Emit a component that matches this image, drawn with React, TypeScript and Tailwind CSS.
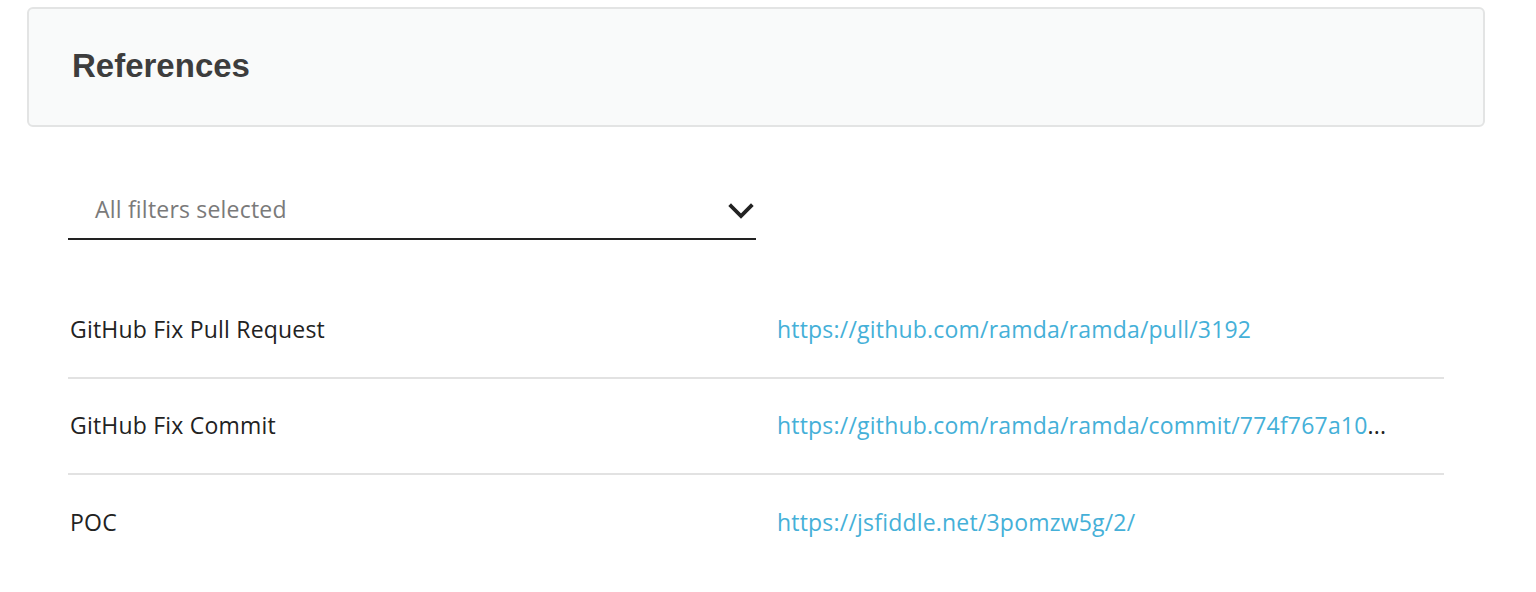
import React from 'react';

const rows = [
  { label: 'GitHub Fix Pull Request', url: 'https://github.com/ramda/ramda/pull/3192', more: false },
  { label: 'GitHub Fix Commit', url: 'https://github.com/ramda/ramda/commit/774f767a10', more: true },
  { label: 'POC', url: 'https://jsfiddle.net/3pomzw5g/2/', more: false },
];

const Chevron = () => (
  <svg width="26" height="16" viewBox="0 0 26 16" fill="none">
    <path d="M3 3l10 10L23 3" stroke="#222" strokeWidth="3.8" strokeLinecap="square" />
  </svg>
);

export default function App() {
  return (
    <div className="min-h-[592px] bg-white pt-[7px] pl-[27px] pr-[51px] font-['Open_Sans',sans-serif]">
      <div className="h-[120px] rounded-[6px] border-2 border-[#e3e4e4] bg-[#f9fafa] flex items-center pl-[43px]">
        <h2 className="text-[33px] font-bold text-[#3d3d3d] font-['Liberation_Sans',sans-serif] pb-[2px]">References</h2>
      </div>

      <div className="pl-[41px] pr-[41px]">
        <div className="mt-[57px] w-[688px] h-[56px] border-b-2 border-[#222] flex items-center justify-between pl-[27px] pr-[2px] cursor-pointer">
          <span className="text-[23px] text-[#7a7a7a] tracking-[0.2px] pb-[4px]">All filters selected</span>
          <Chevron />
        </div>

        <div className="mt-[43px]">
          {rows.map((r, i) => (
            <div
              key={r.label}
              className={`flex items-center h-[96px] ${i < rows.length - 1 ? 'border-b-2 border-[#e2e2e2]' : ''}`}
            >
              <div className="w-[709px] pl-[2px] text-[23px] text-[#222] tracking-[0.2px] pb-[2px]">{r.label}</div>
              <div className="flex-1 whitespace-nowrap text-[23px] text-[#222] tracking-[0.2px] pb-[2px]">
                <a href="#" className="text-[#45b0d8]">{r.url}</a>
                {r.more && <span>...</span>}
              </div>
            </div>
          ))}
        </div>
      </div>
    </div>
  );
}
